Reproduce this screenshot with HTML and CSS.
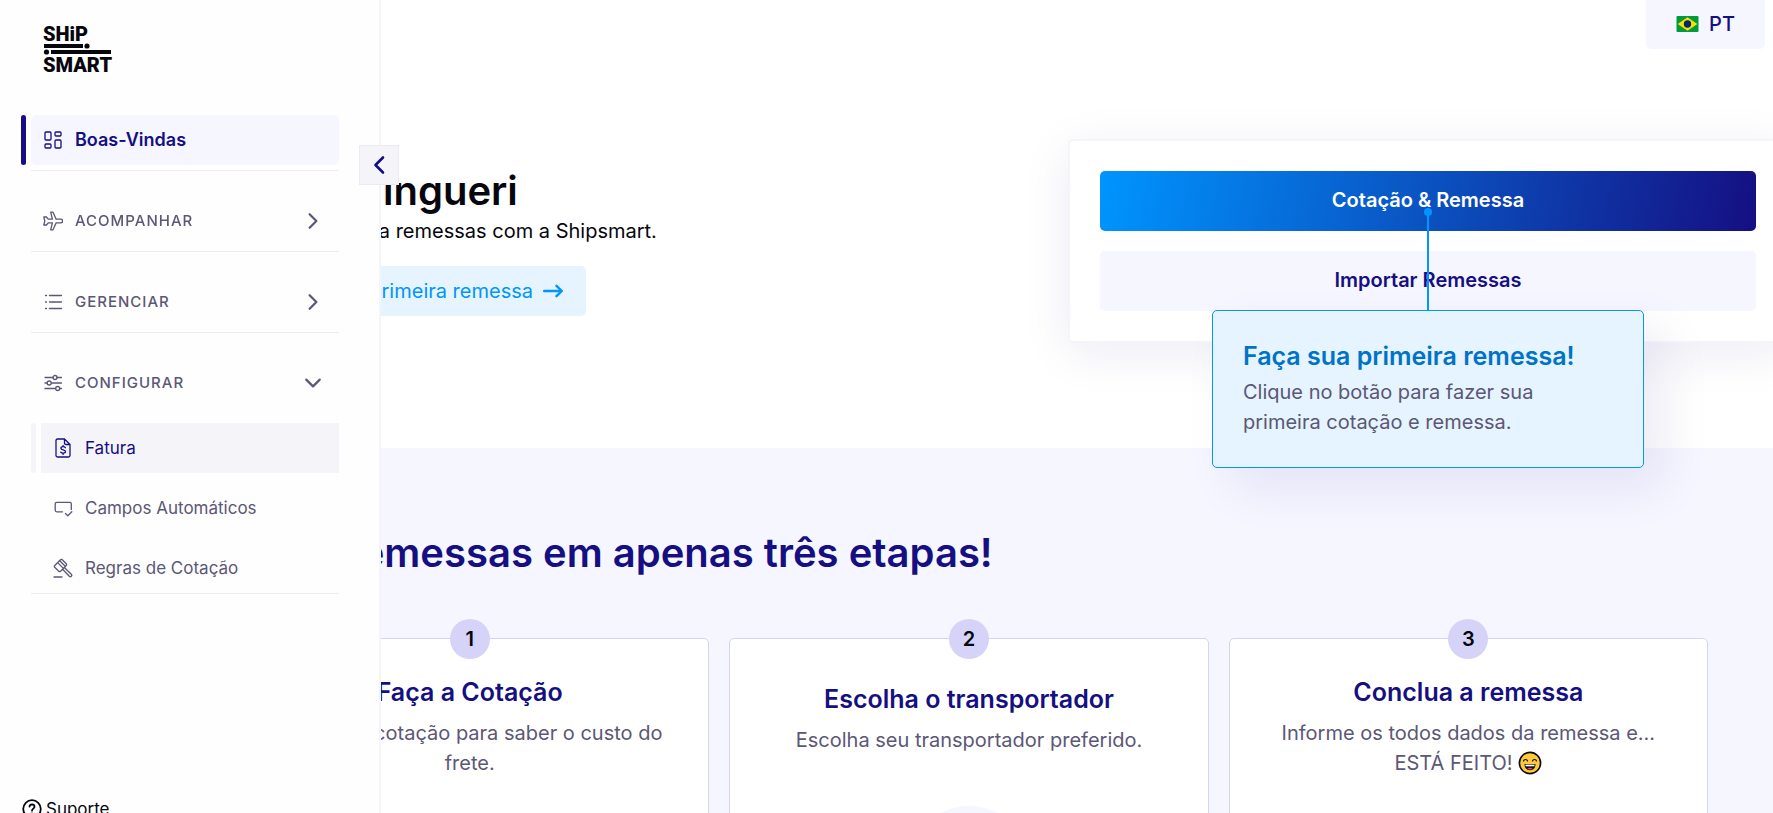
FILE: index.html
```html
<!DOCTYPE html>
<html lang="pt-BR">
<head>
    <meta charset="UTF-8">
    <meta name="viewport" content="width=device-width, initial-scale=1.0">
    <title>Shipsmart</title>
    <link rel="stylesheet" href="styles.css">
</head>
<body>
    <aside class="sidebar">
        <a class="logo" href="#" aria-label="Shipsmart">
            <svg width="76" height="50" viewBox="0 0 76 50">
                <text class="logo-text" x="0" y="17">SHiP</text>
                <rect x="1" y="20" width="39" height="4"/>
                <circle cx="44" cy="22" r="2.6"/>
                <circle cx="3.500" cy="28" r="2.600"/>
                <rect x="8" y="26" width="60" height="4"/>
                <text class="logo-text" x="0" y="48">SMART</text>
            </svg>
        </a>

        <button class="toggle" aria-label="Recolher menu">
            <svg width="12" height="20" viewBox="0 0 12 20" fill="none" stroke="currentColor" stroke-width="2.6" stroke-linecap="round" stroke-linejoin="round"><path d="M10 2.500L2.500 10l7.500 7.500"/></svg>
        </button>

        <nav class="menu">
            <div class="menu-group">
                <a class="menu-item active" href="#">
                    <svg class="icon" viewBox="0 0 20 20"><rect x="2" y="2" width="6" height="8" rx="1"/><rect x="12" y="2" width="6" height="4" rx="1"/><rect x="2" y="14" width="6" height="4" rx="1"/><rect x="12" y="10" width="6" height="8" rx="1"/></svg>
                    Boas-Vindas
                </a>
            </div>
            <div class="menu-group">
                <button class="menu-item heading">
                    <svg class="icon" viewBox="0 0 20 20"><path d="M17.500 8.200h-4.300L10 1.200H7.700l1.700 7H5.200L3.500 6H.8l1 4-1 4h2.700l1.700-2.200h4.200l-1.700 7H10l3.200-7h4.300c1.300 0 2.200-.9 2.200-1.800s-.9-1.800-2.200-1.800z"/></svg>
                    Acompanhar
                    <svg class="chevron" viewBox="0 0 16 16"><path d="M5 2l6 6-6 6"/></svg>
                </button>
            </div>
            <div class="menu-group">
                <button class="menu-item heading">
                    <svg class="icon" viewBox="0 0 20 20"><path d="M6.500 3.500h12M6.500 10h12M6.500 16.500h12M2.500 3.500h1M2.500 10h1M2.500 16.500h1"/></svg>
                    Gerenciar
                    <svg class="chevron" viewBox="0 0 16 16"><path d="M5 2l6 6-6 6"/></svg>
                </button>
            </div>
            <div class="menu-group open">
                <button class="menu-item heading">
                    <svg class="icon" viewBox="0 0 20 20"><path d="M2 4.500h8M14 4.500h4.500M2 10h2M8.500 10h10M2 15.500h10.500M17 15.500h1.500"/><circle cx="12" cy="4.500" r="2"/><circle cx="6.200" cy="10" r="2"/><circle cx="14.700" cy="15.500" r="2"/></svg>
                    Configurar
                    <svg class="chevron" viewBox="0 0 16 16"><path d="M2 5l6 6 6-6"/></svg>
                </button>
                <div class="submenu">
                    <a class="sub-item active" href="#">
                        <svg class="icon" viewBox="0 0 20 20"><path d="M11.500 1H4.500C3.500 1 3 1.600 3 2.500v15c0 .9.500 1.500 1.500 1.500h11c1 0 1.500-.6 1.500-1.500V6.500zM11.500 1v4c0 1 .5 1.500 1.500 1.500h4M12.400 9.700c-.4-.7-1.300-1-2.300-1-1.300 0-2.200.6-2.200 1.600 0 2.300 4.600 1 4.600 3.300 0 1-.9 1.600-2.300 1.600-1.100 0-2-.4-2.500-1.100M10.100 7.500v1.200M10.100 15.200v1.200"/></svg>
                        Fatura
                    </a>
                    <a class="sub-item" href="#">
                        <svg class="icon" viewBox="0 0 20 20"><path d="M9.500 13.800H3.800c-1 0-1.600-.6-1.600-1.500V5.800c0-.9.600-1.500 1.600-1.500h12.900c1 0 1.600.6 1.600 1.500v5.700M12.500 15.500l2.300 2.300 4-4"/></svg>
                        Campos Automáticos
                    </a>
                    <a class="sub-item" href="#">
                        <svg class="icon" viewBox="0 0 20 20"><path d="M1 19h8M9 1.500L13.500 6M1.500 9L6 13.500M9 1.500c-.7-.4-1.300 0-1.800.5L2 7.200c-.6.600-.9 1.200-.5 1.800M13.500 6c.4.700 0 1.300-.5 1.800L7.800 13c-.6.600-1.200.9-1.800.5M4.600 4.600l5.800 5.800M7 3l5.500 5.500M9.600 11.300l6.700 7c.7.700 1.500.600 2 0 .6-.6.600-1.400 0-2l-7-6.800"/></svg>
                        Regras de Cotação
                    </a>
                </div>
            </div>
        </nav>

        <a class="support" href="#">
            <svg width="20" height="20" viewBox="0 0 20 20" fill="none" stroke="currentColor" stroke-width="1.800" stroke-linecap="round"><circle cx="10" cy="10" r="8.800"/><path d="M7.500 7.700c.2-1.400 1.200-2.200 2.500-2.200 1.400 0 2.500.9 2.500 2.200 0 1.900-2.500 1.900-2.500 4M10 14.500v.1"/></svg>
            Suporte
        </a>
    </aside>

    <main class="page">
        <header class="topbar">
            <button class="language">
                <svg width="23" height="16" viewBox="0 0 22 16"><rect width="22" height="16" rx="1" fill="#009b3a"/><path d="M11 1.200L20.800 8 11 14.800 1.200 8z" fill="#fedf00"/><circle cx="11" cy="8" r="3.700" fill="#002776"/></svg>
                PT
            </button>
        </header>

        <section class="hero">
            <div class="intro">
                <h1>Olá, Wingueri</h1>
                <p>Prepare agora remessas com a Shipsmart.</p>
                <a class="first-shipment" href="#">
                    Faça sua primeira remessa
                    <svg width="20" height="14" viewBox="0 0 20 14" fill="none" stroke="currentColor" stroke-width="2.400" stroke-linecap="round" stroke-linejoin="round"><path d="M1.200 7h17.500M13.500 1.800L18.800 7l-5.300 5.200"/></svg>
                </a>
            </div>
            <div class="actions">
                <button class="action primary">Cotação &amp; Remessa</button>
                <button class="action secondary">Importar Remessas</button>
                <div class="tip" role="tooltip">
                    <h3>Faça sua primeira remessa!</h3>
                    <p>Clique no botão para fazer sua primeira cotação e remessa.</p>
                </div>
            </div>
        </section>

        <section class="steps">
            <h2>Envie remessas em apenas três etapas!</h2>
            <div class="cards">
                <article class="card">
                    <span class="number">1</span>
                    <h3>Faça a Cotação</h3>
                    <p>Faça uma cotação para saber o custo do frete.</p>
                </article>
                <article class="card illustrated">
                    <span class="number">2</span>
                    <h3>Escolha o transportador</h3>
                    <p>Escolha seu transportador preferido.</p>
                    <div class="illustration"></div>
                </article>
                <article class="card">
                    <span class="number">3</span>
                    <h3>Conclua a remessa</h3>
                    <p>Informe os todos dados da remessa e... ESTÁ FEITO!
                        <svg class="emoji" viewBox="0 0 24 24"><circle cx="12" cy="12" r="10.600" fill="#ffc93c" stroke="#0a0a14" stroke-width="1.600"/><path d="M5.500 10c.5-2 3.500-2 4 0M14.500 10c.5-2 3.500-2 4 0" fill="none" stroke="#0a0a14" stroke-width="1.200" stroke-linecap="round"/><path d="M6.500 13h11c0 4-2.200 6.200-5.500 6.200S6.500 17 6.500 13z" fill="#0a0a14"/><path d="M7.500 13.600h9v1.700h-9z" fill="#fff"/><path d="M9.300 17.800c1-1.500 4.400-1.500 5.400 0-1.400 1.100-4 1.100-5.400 0z" fill="#f0503c"/></svg>
                    </p>
                </article>
            </div>
        </section>
    </main>
</body>
</html>
```

FILE: styles.css
```css
* {
    box-sizing: border-box;
}
body {
    margin: 0;
    font-family: Inter, sans-serif;
    font-size: 20px;
    line-height: 30px;
    color: #06060f;
    background-color: #fff;
}
h1, h2, h3, p {
    margin: 0;
    font-weight: 600;
}
p {
    font-weight: 400;
}
a {
    color: inherit;
    text-decoration: none;
}
button {
    font: inherit;
    color: inherit;
    border: none;
    padding: 0;
    background: none;
    cursor: pointer;
}

/* Sidebar */
.sidebar {
    position: fixed;
    top: 0;
    left: 0;
    z-index: 10;
    display: flex;
    flex-direction: column;
    width: 381px;
    height: calc(100vh + 20px);
    padding: 24px 40px 14px 21px;
    background-color: #fefefe;
    border-right: 2px solid #f5f5f9;
}
.logo {
    display: flex;
    margin-left: 22px;
}
.logo svg {
    fill: #06060f;
    overflow: visible;
}
.logo-text {
    font-family: Roboto, sans-serif;
    font-size: 20px;
    font-weight: 900;
}
.toggle {
    position: absolute;
    top: 145px;
    right: -20px;
    display: flex;
    align-items: center;
    justify-content: center;
    width: 40px;
    height: 40px;
    color: #150f82;
    background-color: #f5f5f9;
    border: 1px solid #ebebf2;
}
.menu {
    flex: 1;
    display: flex;
    flex-direction: column;
    gap: 25px;
    margin-top: 41px;
}
.menu-group {
    margin-left: 10px;
    padding-bottom: 5px;
    border-bottom: 1px solid #ededf0;
}
.menu-group.open {
    padding-bottom: 0;
}
.menu-item {
    position: relative;
    display: flex;
    align-items: center;
    gap: 12px;
    width: 100%;
    height: 50px;
    padding: 0 17px 0 12px;
    font-size: 18px;
    font-weight: 600;
    color: #5b5776;
    border-radius: 5px;
}
.menu-item.active {
    color: #150f82;
    background-color: #f5f6ff;
}
.menu-item.active::before {
    content: "";
    position: absolute;
    left: -10px;
    width: 5px;
    height: 50px;
    border-radius: 3px;
    background-color: #150f82;
}
.menu-item.heading {
    font-size: 15px;
    font-weight: 500;
    letter-spacing: 1px;
    text-transform: uppercase;
}
.icon {
    flex: none;
    width: 20px;
    height: 20px;
    fill: none;
    stroke: currentColor;
    stroke-width: 1.3;
    stroke-linecap: round;
    stroke-linejoin: round;
}
.chevron {
    width: 18px;
    height: 18px;
    margin-left: auto;
    fill: none;
    stroke: currentColor;
    stroke-width: 2;
    stroke-linecap: round;
    stroke-linejoin: round;
}
.submenu {
    display: flex;
    flex-direction: column;
    gap: 10px;
    margin-top: 15px;
}
.sub-item {
    position: relative;
    display: flex;
    align-items: center;
    gap: 12px;
    height: 50px;
    margin-left: 10px;
    padding-left: 12px;
    font-size: 17px;
    color: #5b5776;
}
.sub-item.active {
    color: #150f82;
    background-color: #f5f5f9;
}
.sub-item.active::before {
    content: "";
    position: absolute;
    left: -10px;
    width: 5px;
    height: 50px;
    border-radius: 3px;
    background-color: #f5f5f9;
}
.support {
    display: flex;
    align-items: center;
    gap: 4px;
    margin-left: 1px;
    font-size: 17px;
    line-height: 20px;
}

/* Page */
.page {
    display: flex;
    flex-direction: column;
    height: 100vh;
    margin-left: 173px;
    overflow: hidden;
}
.topbar {
    display: flex;
    justify-content: flex-end;
    padding-right: 8px;
}
.language {
    display: flex;
    align-items: center;
    gap: 10px;
    height: 49px;
    padding: 0 30px 2px;
    font-weight: 500;
    color: #150f82;
    background-color: #f5f6ff;
    border-radius: 0 0 5px 5px;
}

/* Hero */
.hero {
    flex: none;
    display: flex;
    justify-content: space-between;
    margin-right: -15px;
    padding: 90px 0 105px 83px;
}
.intro {
    display: flex;
    flex-direction: column;
    align-items: flex-start;
    padding-top: 27px;
}
.intro h1 {
    font-size: 40px;
    line-height: 50px;
}
.first-shipment {
    display: flex;
    align-items: center;
    gap: 10px;
    height: 50px;
    margin-top: 20px;
    padding: 0 23px;
    color: #0095ff;
    background-color: #e5f4ff;
    border-radius: 5px;
}
.actions {
    position: relative;
    display: flex;
    flex-direction: column;
    gap: 20px;
    width: 47%;
    padding: 30px;
    background-color: #fff;
    border: 2px solid #f5f5f9;
    border-radius: 5px;
    box-shadow: 0 10px 50px rgba(21, 15, 130, 0.08);
}
.action {
    height: 60px;
    padding-bottom: 2px;
    font-weight: 600;
    border-radius: 5px;
}
.primary {
    color: #fff;
    background: linear-gradient(100deg, #0095ff, #150f82);
}
.secondary {
    color: #150f82;
    background-color: #f5f6ff;
}
.tip {
    position: absolute;
    top: 169px;
    left: 50%;
    width: 432px;
    padding: 30px;
    transform: translateX(-50%);
    color: #5b5776;
    background-color: #e5f4ff;
    border: 1px solid #0095ff;
    border-radius: 5px;
    box-shadow: 20px 20px 50px rgba(21, 15, 130, 0.08);
}
.tip::before {
    content: "";
    position: absolute;
    bottom: 100%;
    left: 50%;
    width: 2px;
    height: 100px;
    margin-left: -1px;
    background-color: #0095ff;
}
.tip::after {
    content: "";
    position: absolute;
    top: -103px;
    left: 50%;
    width: 8px;
    height: 8px;
    margin-left: -4px;
    border-radius: 50%;
    background-color: #0095ff;
}
.tip h3 {
    font-size: 25px;
    color: #0073c8;
    margin-bottom: 6px;
}

/* Steps */
.steps {
    flex: 1 0 auto;
    padding: 80px 65px 80px 57px;
    background-color: #f5f6ff;
}
.steps h2 {
    font-size: 40px;
    line-height: 50px;
    color: #150f82;
}
.cards {
    display: grid;
    grid-template-columns: repeat(3, 1fr);
    gap: 20px;
    margin-top: 60px;
}
.card {
    position: relative;
    padding: 38px 40px;
    text-align: center;
    color: #5b5776;
    background-color: #fff;
    border: 1px solid #d3d4f8;
    border-radius: 5px;
}
.card h3 {
    margin-bottom: 11px;
    font-size: 25px;
    color: #150f82;
}
.illustrated {
    padding-top: 45px;
}
.number {
    position: absolute;
    top: -20px;
    left: 50%;
    width: 40px;
    line-height: 40px;
    margin-left: -20px;
    font-weight: 600;
    color: #06060f;
    background-color: #d5d4f8;
    border-radius: 50%;
}
.illustration {
    width: 120px;
    height: 120px;
    margin: 51px auto 0;
    border-radius: 50%;
    background-color: #f5f6ff;
}
.emoji {
    width: 24px;
    height: 24px;
    vertical-align: -5px;
}
```
